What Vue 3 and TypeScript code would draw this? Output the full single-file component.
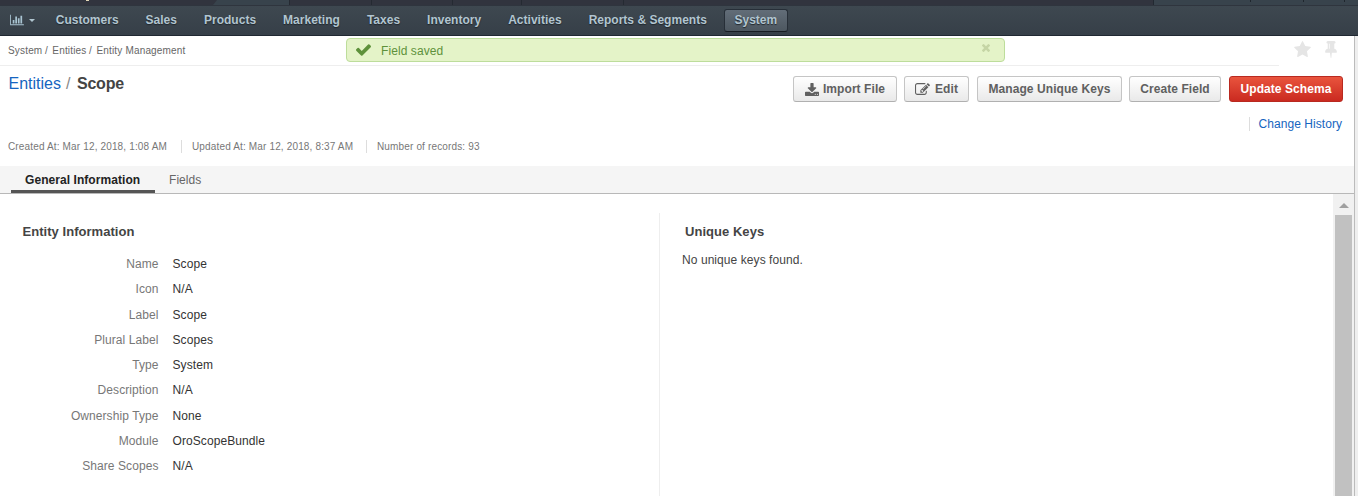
<script setup lang="ts">
interface IconDef { box: string; d: string }
interface Action { label: string; icon?: string; kind?: string }

const icons: Record<string, IconDef> = {
  chart: { box: '0 0 2048 1792', d: 'M640 896v512h-256v-512h256zm384-512v1024h-256v-1024h256zm1024 1152v128h-2048v-1536h128v1408h1920zm-640-896v768h-256v-768h256zm384-384v1152h-256v-1152h256z' },
  check: { box: '121 334 1550 1188', d: 'M1671 566q0 40-28 68l-724 724-136 136q-28 28-68 28t-68-28l-136-136-362-362q-28-28-28-68t28-68l136-136q28-28 68-28t68 28l294 295 656-657q28-28 68-28t68 28l136 136q28 28 28 68z' },
  times: { box: '302 366 1188 1188', d: 'M1490 1322q0 40-28 68l-136 136q-28 28-68 28t-68-28l-294-294-294 294q-28 28-68 28t-68-28l-136-136q-28-28-28-68t28-68l294-294-294-294q-28-28-28-68t28-68l136-136q28-28 68-28t68 28l294 294 294-294q28-28 68-28t68 28l136 136q28 28 28 68t-28 68l-294 294 294 294q28 28 28 68z' },
  star: { box: '64 32 1664 1587', d: 'M1728 647q0 22-26 48l-363 354 86 500q1 7 1 20 0 21-10.5 35.5t-30.5 14.5q-19 0-40-12l-449-236-449 236q-22 12-40 12-21 0-31.5-14.5t-10.5-35.5q0-6 2-20l86-500-364-354q-25-27-25-48 0-37 56-46l502-73 225-455q19-41 49-41t49 41l225 455 502 73q56 9 56 46z' },
  pin: { box: '320 128 1152 1664', d: 'M800 864v-448q0-14-9-23t-23-9-23 9-9 23v448q0 14 9 23t23 9 23-9 9-23zm672 352q0 26-19 45t-45 19h-429l-51 483q-2 12-10.5 20.5t-20.5 8.5h-1q-27 0-32-27l-76-485h-404q-26 0-45-19t-19-45q0-123 78.5-221.5t177.5-98.5v-512q-52 0-90-38t-38-90 38-90 90-38h640q52 0 90 38t38 90-38 90-90 38v512q99 0 177.5 98.5t78.5 221.5z' },
  download: { box: '64 0 1664 1536', d: 'M1344 1344q0-26-19-45t-45-19-45 19-19 45 19 45 45 19 45-19 19-45zm256 0q0-26-19-45t-45-19-45 19-19 45 19 45 45 19 45-19 19-45zm128-224v320q0 40-28 68t-68 28h-1472q-40 0-68-28t-28-68v-320q0-40 28-68t68-28h465l135 136q58 56 136 56t136-56l136-136h464q40 0 68 28t28 68zm-325-569q17 41-14 70l-448 448q-18 19-45 19t-45-19l-448-448q-31-29-14-70 17-39 59-39h256v-448q0-26 19-45t45-19h256q26 0 45 19t19 45v448h256q42 0 59 39z' },
  edit: { box: '0 128 1792 1408', d: 'M888 1184l116-116-152-152-116 116v56h96v96h56zm440-720q-16-16-33 1l-350 350q-17 17-1 33t33-1l350-350q17-17 1-33zm80 594v190q0 119-84.5 203.5t-203.5 84.5h-832q-119 0-203.5-84.5t-84.5-203.5v-832q0-119 84.5-203.5t203.5-84.5h832q63 0 117 25 15 7 18 23 3 17-9 29l-49 49q-14 14-32 8-23-6-45-6h-832q-66 0-113 47t-47 113v832q0 66 47 113t113 47h832q66 0 113-47t47-113v-126q0-13 9-22l64-64q15-15 35-7t20 29zm-96-738l288 288-672 672h-288v-288zm444 132l-92 92-288-288 92-92q28-28 68-28t68 28l152 152q28 28 28 68t-28 68z' }
}

const nav: string[] = ['Customers', 'Sales', 'Products', 'Marketing', 'Taxes', 'Inventory', 'Activities', 'Reports & Segments', 'System']
const actions: Action[] = [
  { label: 'Import File', icon: 'download', kind: 'import' },
  { label: 'Edit', icon: 'edit', kind: 'edit' },
  { label: 'Manage Unique Keys', kind: 'keys' },
  { label: 'Create Field', kind: 'create' },
  { label: 'Update Schema', kind: 'danger' }
]
const meta: string[] = ['Created At: Mar 12, 2018, 1:08 AM', 'Updated At: Mar 12, 2018, 8:37 AM', 'Number of records: 93']
const fields: [string, string][] = [
  ['Name', 'Scope'], ['Icon', 'N/A'], ['Label', 'Scope'], ['Plural Label', 'Scopes'], ['Type', 'System'],
  ['Description', 'N/A'], ['Ownership Type', 'None'], ['Module', 'OroScopeBundle'], ['Share Scopes', 'N/A']
]
</script>

<template>
  <div class="page">
    <div class="strip">
      <div class="brand"><i></i></div>
      <svg class="tab-shape" width="77" height="5" viewBox="0 0 77 5"><path d="M4 0H77V5H0Z" /></svg>
      <div class="cell c1"></div><div class="cell c2"></div><div class="cell c3"></div><div class="cell c4"></div>
      <div class="cell c5"></div><div class="tools"><i></i><i></i><i></i></div>
    </div>
    <nav class="nav">
      <div class="dash">
        <svg class="chart" :viewBox="icons.chart.box"><path :d="icons.chart.d" /></svg>
        <span class="caret"></span>
      </div>
      <a v-for="n in nav" :key="n" :class="{ active: n === 'System' }">{{ n }}</a>
    </nav>
    <div class="shell">
      <main class="main">
        <div class="crumbs">
          <div class="path"><span>System</span><span>/</span><span class="step">Entities</span><span>/</span><span class="step">Entity Management</span></div>
          <div class="marks">
            <svg class="star" :viewBox="icons.star.box"><path :d="icons.star.d" /></svg>
            <svg class="pin" :viewBox="icons.pin.box"><path :d="icons.pin.d" /></svg>
          </div>
          <div class="flash">
            <svg class="check" :viewBox="icons.check.box"><path :d="icons.check.d" /></svg>
            <span>Field saved</span>
            <svg class="times" :viewBox="icons.times.box"><path :d="icons.times.d" /></svg>
          </div>
        </div>
        <header class="head">
          <h1><a>Entities</a><i>/</i><b>Scope</b></h1>
          <div class="actions">
            <button v-for="a in actions" :key="a.label" :class="a.kind">
              <svg v-if="a.icon" :viewBox="icons[a.icon].box"><path :d="icons[a.icon].d" /></svg>{{ a.label }}
            </button>
          </div>
        </header>
        <div class="history"><a>Change History</a></div>
        <div class="meta"><span v-for="m in meta" :key="m">{{ m }}</span></div>
        <div class="tabs"><span class="on">General Information</span><span>Fields</span></div>
        <div class="body">
          <section class="info">
            <h2>Entity Information</h2>
            <dl>
              <div v-for="[k, v] in fields" :key="k"><dt>{{ k }}</dt><dd>{{ v }}</dd></div>
            </dl>
          </section>
          <section class="unique">
            <h2>Unique Keys</h2>
            <p>No unique keys found.</p>
          </section>
          <div class="scroll"><span class="up"></span><span class="thumb"></span></div>
        </div>
      </main>
      <div class="edge"></div>
    </div>
  </div>
</template>

<style>
body { margin: 0; background: #fff; overflow: hidden; }
</style>

<style scoped>
* { box-sizing: border-box; }
.page { width: 1358px; height: 496px; overflow: hidden; display: flex; flex-direction: column; font: 12px/16px "Liberation Sans", Arial, sans-serif; color: #444; }
svg { display: block; fill: currentColor; flex: none; }
.strip { height: 6px; flex: none; display: flex; background: #31343e; border-bottom: 1px solid #2f353e; }
.brand { width: 213px; padding-left: 86px; }
.brand i { display: block; width: 3px; height: 1px; background: #e3d9b8; }
.tab-shape { color: #38434c; }
.cell { border-left: 1px solid #252a32; }
.c1 { width: 82px; }
.c2 { width: 81px; }
.c3 { width: 69px; }
.c4 { width: 102px; }
.c5 { width: 530px; }
.tab-shape { margin-right: -1px; }
.tools { flex: 1; background: #38434c; border-left: 1px solid #222931; display: flex; padding-left: 96px; gap: 52px; }
.tools i { width: 1px; height: 2px; background: #1f262d; }
.tools i:nth-child(2) { margin-right: -12px; }
.nav { height: 30px; flex: none; display: flex; align-items: center; background: linear-gradient(#3e4850, #363f48); border-bottom: 1px solid #202832; padding: 0 0 1px 10px; }
.dash { width: 32.3px; display: flex; align-items: center; gap: 5px; color: #a9c4d2; }
.chart { width: 14px; height: 12px; }
.caret { border: 3px solid transparent; border-top-color: #b0c5cf; border-bottom: 0; }
.nav a { font-weight: bold; letter-spacing: .01px; color: #b2c5d0; padding: 0 13.5px; text-shadow: 0 1px 1px #20272d; white-space: nowrap; }
.nav .active { margin-left: 3.5px; padding: 0 9.6px; height: 23px; line-height: 21px; border: 1px solid #272f38; border-bottom-color: #171c22; border-radius: 3px; background: linear-gradient(#626d78, #4d5760); }
.shell { flex: 1; display: flex; min-height: 0; }
.main { width: 1354px; display: flex; flex-direction: column; }
.edge { width: 4px; background: #eee; border-left: 1px solid #bbb; }
.crumbs { position: relative; height: 30px; flex: none; display: flex; justify-content: space-between; padding: 0 17px 0 8px; }
.crumbs::after { content: ""; position: absolute; left: 0; width: 1279px; bottom: 0; height: 1px; background: #eee; }
.path { display: flex; gap: 2.5px; font-size: 10px; letter-spacing: .17px; line-height: 30px; color: #666; }
.path .step { margin-left: 2px; }
.marks { display: flex; gap: 14px; padding-top: 5px; color: #e5e5e5; }
.star { width: 17px; height: 16px; }
.pin { width: 12px; height: 17px; }
.flash { position: absolute; left: 346px; top: 2px; width: 659px; height: 24px; border: 1px solid #bddd9b; border-radius: 4px; background: #e4f3c8; display: flex; align-items: center; padding: 0 14px 0 9px; color: #5e913b; letter-spacing: .08px; }
.flash span { padding-top: 1px; }
.check { width: 15px; height: 12px; margin-right: 10px; }
.times { width: 8px; height: 8px; margin: -5px 0 0 auto; color: #c5d5a5; }
.head { display: flex; justify-content: space-between; padding: 10px 11px 0 8.5px; height: 50px; flex: none; }
h1 { margin: 0; font-weight: normal; font-size: 16px; line-height: 16px; display: flex; }
h1 a, .history a { color: #1565c0; }
h1 i { font-style: normal; color: #888; margin: 0 6.5px 0 5px; }
h1 b { letter-spacing: -.2px; }
.actions { display: flex; height: 26px; }
button { font: bold 12px/16px "Liberation Sans", Arial, sans-serif; letter-spacing: .07px; color: #606060; border: 1px solid #c5c5c5; border-bottom-color: #b0b0b0; border-radius: 3px; background: linear-gradient(#fff, #e9e9e9); display: flex; align-items: center; justify-content: center; gap: 5px; padding: 0; white-space: nowrap; }
button.import { width: 104px; margin-right: 7px; gap: 4px; }
.import svg { width: 14px; height: 13px; }
button.edit { width: 65px; margin-right: 8px; }
.edit svg { width: 15px; height: 12px; }
button.keys { width: 145px; margin-right: 7px; }
button.create { width: 92px; margin-right: 8px; }
button.danger { width: 114px; color: #fff; border-color: #b92920; background: linear-gradient(#e9543d, #ca2a20); }
.history { display: flex; justify-content: flex-end; padding: 1px 12px 0 0; height: 22px; flex: none; }
.history a { border-left: 1px solid #ddd; padding-left: 9px; height: 14px; line-height: 14px; letter-spacing: .05px; }
.meta { display: flex; font-size: 10px; letter-spacing: .15px; line-height: 13px; color: #777; padding: 2px 0 0 8px; height: 28px; flex: none; }
.meta span { height: 13px; white-space: nowrap; width: 173px; }
.meta span + span { border-left: 1px solid #ddd; padding-left: 10px; width: 185px; }
.tabs { height: 28px; flex: none; background: #f5f5f5; border-bottom: 1px solid #b8b8b8; display: flex; padding-left: 11px; color: #666; }
.tabs span { padding: 0 14px; line-height: 28px; letter-spacing: .06px; white-space: nowrap; }
.tabs .on { width: 144px; color: #222; font-weight: bold; border-bottom: 3px solid #555; }
.body { flex: 1; display: flex; min-height: 0; }
.info { width: 659px; padding: 30px 0 0 22.5px; }
.unique { flex: 1; margin-top: 19px; border-left: 1px solid #eee; padding: 11px 0 0 22px; }
h2 { margin: 0; font-size: 13px; line-height: 16px; letter-spacing: .04px; color: #444; }
.unique h2 { padding-left: 3px; }
p { margin: 12px 0 0; letter-spacing: .07px; }
dl { margin: 12px 0 0; }
dl div { display: flex; height: 25.25px; line-height: 25px; letter-spacing: .08px; }
dt { width: 136px; text-align: right; color: #777; }
dd { margin: 0 0 0 14px; color: #333; }
.scroll { width: 21px; background: #f1f1f1; display: flex; flex-direction: column; padding: 9px 2px 0; align-items: center; }
.up { border: 5px solid transparent; border-top: 0; border-bottom-color: #a0a0a0; }
.thumb { width: 17px; flex: 1; margin-top: 7px; background: #c1c1c1; }
</style>
